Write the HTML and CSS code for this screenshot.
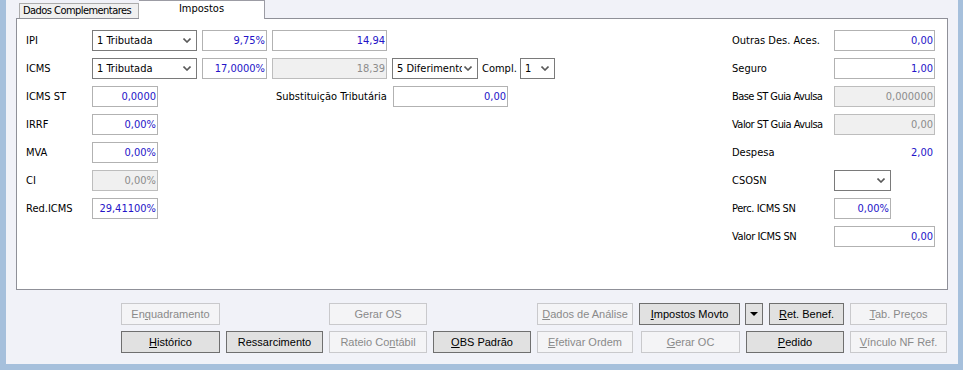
FILE: index.html
```html
<!DOCTYPE html>
<html lang="pt-BR">
<head>
<meta charset="utf-8">
<title>Impostos</title>
<link rel="stylesheet" href="styles.css">
</head>
<body>
<div class="window">
  <div class="tabs">
    <div class="tab tight">Dados Complementares</div>
    <div class="tab active">Impostos</div>
  </div>
  <div class="panel">
    <div class="left">
      <div class="row">
        <span class="lbl">IPI</span>
        <div class="sel w105"><span>1 Tributada</span><svg class="chev" width="8" height="5" viewBox="0 0 8 5"><polyline points="0.5,0.5 4,4 7.5,0.5" /></svg></div>
        <div class="inp w65 ml5">9,75%</div>
        <div class="inp w115 ml5">14,94</div>
      </div>
      <div class="row">
        <span class="lbl">ICMS</span>
        <div class="sel w105"><span>1 Tributada</span><svg class="chev" width="8" height="5" viewBox="0 0 8 5"><polyline points="0.5,0.5 4,4 7.5,0.5" /></svg></div>
        <div class="inp w65 ml5">17,0000%</div>
        <div class="inp dis w115 ml5">18,39</div>
        <div class="sel w86 ml5"><span class="clip">5 Diferimento</span><svg class="chev" width="8" height="5" viewBox="0 0 8 5"><polyline points="0.5,0.5 4,4 7.5,0.5" /></svg></div>
        <span class="lbl-inline">Compl.</span>
        <div class="sel w35"><span>1</span><svg class="chev" width="8" height="5" viewBox="0 0 8 5"><polyline points="0.5,0.5 4,4 7.5,0.5" /></svg></div>
      </div>
      <div class="row">
        <span class="lbl">ICMS ST</span>
        <div class="inp w66">0,0000</div>
        <span class="lbl-sub">Substituição Tributária</span>
        <div class="inp w115">0,00</div>
      </div>
      <div class="row">
        <span class="lbl">IRRF</span>
        <div class="inp w66">0,00%</div>
      </div>
      <div class="row">
        <span class="lbl">MVA</span>
        <div class="inp w66">0,00%</div>
      </div>
      <div class="row">
        <span class="lbl">CI</span>
        <div class="inp dis w66">0,00%</div>
      </div>
      <div class="row">
        <span class="lbl">Red.ICMS</span>
        <div class="inp w66">29,41100%</div>
      </div>
    </div>
    <div class="right">
      <div class="row"><span class="rlbl">Outras Des. Aces.</span><div class="inp w101">0,00</div></div>
      <div class="row"><span class="rlbl">Seguro</span><div class="inp w101">1,00</div></div>
      <div class="row"><span class="rlbl tight">Base ST Guia Avulsa</span><div class="inp dis w101">0,000000</div></div>
      <div class="row"><span class="rlbl tight">Valor ST Guia Avulsa</span><div class="inp dis w101">0,00</div></div>
      <div class="row"><span class="rlbl">Despesa</span><div class="val w101">2,00</div></div>
      <div class="row"><span class="rlbl">CSOSN</span><div class="sel w57"><span></span><svg class="chev" width="8" height="5" viewBox="0 0 8 5"><polyline points="0.5,0.5 4,4 7.5,0.5" /></svg></div></div>
      <div class="row"><span class="rlbl semi">Perc. ICMS SN</span><div class="inp w57">0,00%</div></div>
      <div class="row"><span class="rlbl semi">Valor ICMS SN</span><div class="inp w101">0,00</div></div>
    </div>
  </div>
  <div class="buttons">
    <div class="btn off c1"><span>En<u>q</u>uadramento</span></div>
    <div class="btn off c3">Gerar OS</div>
    <div class="btn off c5"><span><u>D</u>ados de Análise</span></div>
    <div class="btn on c6"><span><u>I</u>mpostos Movto</span></div>
    <div class="c7 pair">
      <div class="btn on arrow"><svg width="8" height="4" viewBox="0 0 8 4"><polygon points="0,0 8,0 4,4" /></svg></div>
      <div class="btn on grow"><span><u>R</u>et. Benef.</span></div>
    </div>
    <div class="btn off c8"><span><u>T</u>ab. Preços</span></div>

    <div class="btn on c1"><span><u>H</u>istórico</span></div>
    <div class="btn on c2">Ressarcimento</div>
    <div class="btn off c3"><span>Rateio Co<u>n</u>tábil</span></div>
    <div class="btn on c4"><span><u>O</u>BS Padrão</span></div>
    <div class="btn off c5"><span><u>E</u>fetivar Ordem</span></div>
    <div class="btn off c6 ind2"><span><u>G</u>erar OC</span></div>
    <div class="btn on c7"><span><u>P</u>edido</span></div>
    <div class="btn off c8"><span><u>V</u>ínculo NF Ref.</span></div>
  </div>
</div>
</body>
</html>
```

FILE: styles.css
```css
* { box-sizing: border-box; }
html, body { margin: 0; padding: 0; }
body {
  font-family: "DejaVu Sans Condensed", "DejaVu Sans", sans-serif;
  font-stretch: condensed;
  font-size: 11px;
  color: #000;
  background: #a6c0dc;
}
.tight { letter-spacing: -0.55px; }
.semi { letter-spacing: -0.4px; }
.window {
  width: 963px;
  height: 370px;
  background: #f1f2f8;
  border-left: 6px solid #a6c0dc;
  border-right: 5px solid #a6c0dc;
  border-bottom: 6px solid #a6c0dc;
  display: flex;
  flex-direction: column;
}
.tabs {
  height: 18px;
  display: flex;
  align-items: flex-end;
  padding-left: 13px;
}
.tab {
  height: 15px;
  width: 120px;
  border: 1px solid #acacac;
  border-bottom: none;
  background: #f0f0f0;
  padding-left: 3px;
  line-height: 13px;
  white-space: nowrap;
}
.tab.active {
  position: relative;
  z-index: 1;
  align-self: flex-start;
  height: 19px;
  width: 126px;
  margin-bottom: -1px;
  background: #fff;
  border-left: none;
  border-color: #9c9ca4;
  text-align: center;
  padding-left: 0;
  line-height: 15px;
}
.panel {
  margin-left: 10px;
  width: 932px;
  height: 272px;
  background: #fff;
  border: 1px solid #8f9098;
  display: flex;
  justify-content: space-between;
  padding: 11px 12px 0 9px;
}
.left, .right {
  display: flex;
  flex-direction: column;
  gap: 7px;
}
.row {
  height: 21px;
  display: flex;
  align-items: center;
}
.lbl { width: 66px; }
.lbl-inline { margin-left: 4px; width: 38px; }
.lbl-sub { margin-left: 118px; width: 117px; white-space: nowrap; }
.rlbl { width: 102px; white-space: nowrap; }
.inp, .sel, .val {
  height: 21px;
  display: flex;
  align-items: center;
}
.inp {
  justify-content: flex-end;
  border: 1px solid #b2b2b2;
  background: #fff;
  color: #2414c8;
  padding-right: 1px;
  white-space: nowrap;
}
.inp.dis {
  background: #f0f0f0;
  border-color: #bdbdbd;
  color: #8c8c8c;
}
.val {
  justify-content: flex-end;
  color: #2414c8;
  padding-right: 2px;
}
.sel {
  border: 1px solid #7a7a7a;
  background: #fff;
  padding-left: 4px;
  padding-right: 5px;
  gap: 2px;
}
.sel span { flex: 1; white-space: nowrap; overflow: hidden; }
.sel .clip { text-overflow: clip; }
.chev { flex: none; }
.chev polyline {
  fill: none;
  stroke: #5a5a5a;
  stroke-width: 1.6;
}
.w35 { width: 35px; }
.w57 { width: 57px; }
.w65 { width: 65px; }
.w66 { width: 66px; }
.w86 { width: 86px; }
.w101 { width: 101px; }
.w105 { width: 105px; }
.w115 { width: 115px; }
.ml5 { margin-left: 5px; }

.buttons {
  margin-top: 13px;
  padding-left: 115px;
  display: grid;
  grid-template-columns: 99px 97px 98px 98px 96px 101px 98px 97px;
  grid-template-rows: 22px 22px;
  column-gap: 6px;
  row-gap: 6px;
  font-family: "Liberation Sans", Arial, sans-serif;
  font-stretch: normal;
}
.btn {
  display: flex;
  align-items: center;
  justify-content: center;
  white-space: nowrap;
  border: 1px solid #adadad;
}
.btn.on {
  background: #e1e1e1;
  border-color: #6f6f6f;
  color: #000;
}
.btn.off {
  background: #f4f4f6;
  border-color: #c9c9cc;
  color: #8a8a8a;
}
.btn u { text-decoration: underline; text-underline-offset: 1px; }
.c1 { grid-column: 1; }
.c2 { grid-column: 2; }
.c3 { grid-column: 3; }
.c4 { grid-column: 4; }
.c5 { grid-column: 5; }
.c6 { grid-column: 6; }
.c7 { grid-column: 7; }
.c8 { grid-column: 8; }
.ind2 { margin-left: 2px; }
.pair {
  display: flex;
  gap: 6px;
  margin-left: -1px;
}
.arrow { width: 18px; flex: none; }
.arrow polygon { fill: #000; }
.grow { flex: 1; }
```
